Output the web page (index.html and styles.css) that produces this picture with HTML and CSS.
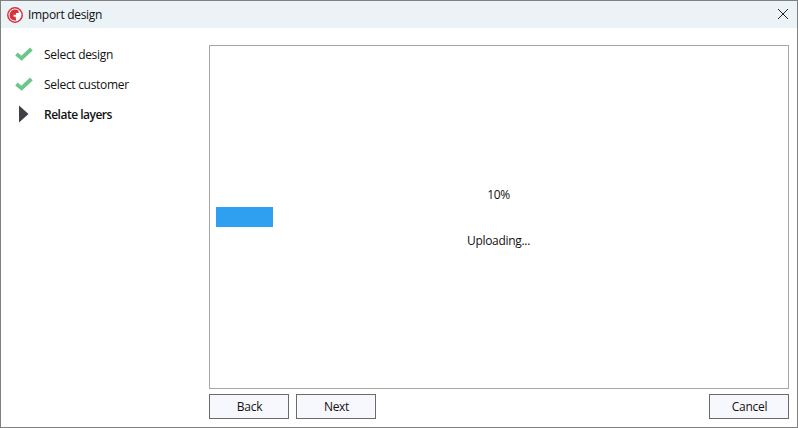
FILE: index.html
```html
<!DOCTYPE html>
<html>
<head>
	<title>Import design</title>
	<meta charset="utf-8">
	<link rel="stylesheet" href="styles.css">
</head>
<body>
  <div class="window">
  	<div class="titlebar">
  		<svg class="logo" width="18" height="18" viewBox="0 0 18 18">
  			<circle cx="9" cy="9" r="7.2" fill="#fff" stroke="#d9323c" stroke-width="1.5"/>
  			<path d="M9.8 3.6 A5.5 5.5 0 1 0 10.2 14.4 L9.6 10.8 L7.6 10.8 L7.6 8.8 L10 8.8 L10 7 L12.6 7 L12.4 4.6 Z" fill="#d9323c"/>
  		</svg>
  		<span class="title">Import design</span>
  		<svg class="close" width="12" height="12" viewBox="0 0 12 12">
  			<path d="M1 1 L11 11 M11 1 L1 11" stroke="#222" stroke-width="1" fill="none"/>
  		</svg>
  	</div>
  	<div class="content">
  		<ul class="steps">
  			<li class="step">
  				<svg class="step-icon" width="18" height="14" viewBox="0 0 18 14">
  					<path d="M1.4 7 L6.6 11.2 L16.4 2" stroke="#6cc68a" stroke-width="3.8" fill="none"/>
  				</svg>
  				Select design
  			</li>
  			<li class="step">
  				<svg class="step-icon" width="18" height="14" viewBox="0 0 18 14">
  					<path d="M1.4 7 L6.6 11.2 L16.4 2" stroke="#6cc68a" stroke-width="3.8" fill="none"/>
  				</svg>
  				Select customer
  			</li>
  			<li class="step current">
  				<svg class="step-icon" width="18" height="18" viewBox="0 0 18 18">
  					<path d="M4 0.5 L13.5 9 L4 17.5 Z" fill="#3f3f46"/>
  				</svg>
  				Relate layers
  			</li>
  		</ul>
  		<div class="main">
  			<div class="panel">
  				<div class="percent">10%</div>
  				<div class="track"><div class="fill" style="width: 10%"></div></div>
  				<div class="status">Uploading...</div>
  			</div>
  			<div class="buttons">
  				<button class="btn">Back</button>
  				<button class="btn">Next</button>
  				<button class="btn cancel">Cancel</button>
  			</div>
  		</div>
  	</div>
  </div>
</body>
</html>
```

FILE: styles.css
```css
html, body {
	margin: 0;
	padding: 0;
}
body {
	font-family: "Open Sans", "Noto Sans", sans-serif;
	font-size: 12px;
	letter-spacing: -0.3px;
	color: #111;
	background: #fff;
}
.window {
	display: flex;
	flex-direction: column;
	box-sizing: border-box;
	width: 798px;
	height: 428px;
	border: 1px solid #808080;
	overflow: hidden;
}
.titlebar {
	display: flex;
	align-items: center;
	height: 27px;
	padding: 0 8px 0 5px;
	background: #ebf3f7;
}
.logo {
	margin-right: 4px;
}
.title {
	flex: 1;
	margin-top: -1px;
}
.close {
	margin-top: -2px;
}
.content {
	display: flex;
	flex: 1;
}
.steps {
	width: 208px;
	margin: 0;
	padding: 11px 0 0 0;
	list-style: none;
}
.step {
	display: flex;
	align-items: center;
	height: 30px;
	padding-left: 14px;
}
.step-icon {
	width: 18px;
	margin-right: 11px;
}
.current {
	font-weight: 600;
	letter-spacing: -0.5px;
}
.main {
	display: flex;
	flex-direction: column;
	width: 580px;
	padding-top: 17px;
}
.panel {
	display: flex;
	flex-direction: column;
	justify-content: center;
	box-sizing: border-box;
	height: 344px;
	padding: 4px 7px 0 6px;
	border: 1px solid #a6a6a6;
	text-align: center;
}
.percent {
	height: 17px;
	line-height: 17px;
	margin-bottom: 4px;
}
.track {
	height: 20px;
}
.fill {
	height: 100%;
	background: #2f9ff0;
}
.status {
	height: 17px;
	line-height: 17px;
	margin-top: 5px;
	margin-bottom: 3px;
}
.buttons {
	display: flex;
	gap: 7px;
	margin-top: 5px;
}
.btn {
	box-sizing: border-box;
	width: 80px;
	height: 25px;
	padding: 0 0 0 1px;
	border: 1px solid #6b6b6b;
	background: #f7f8fe;
	font-family: inherit;
	font-size: 12px;
	letter-spacing: inherit;
	color: #111;
}
.cancel {
	margin-left: auto;
}
```
